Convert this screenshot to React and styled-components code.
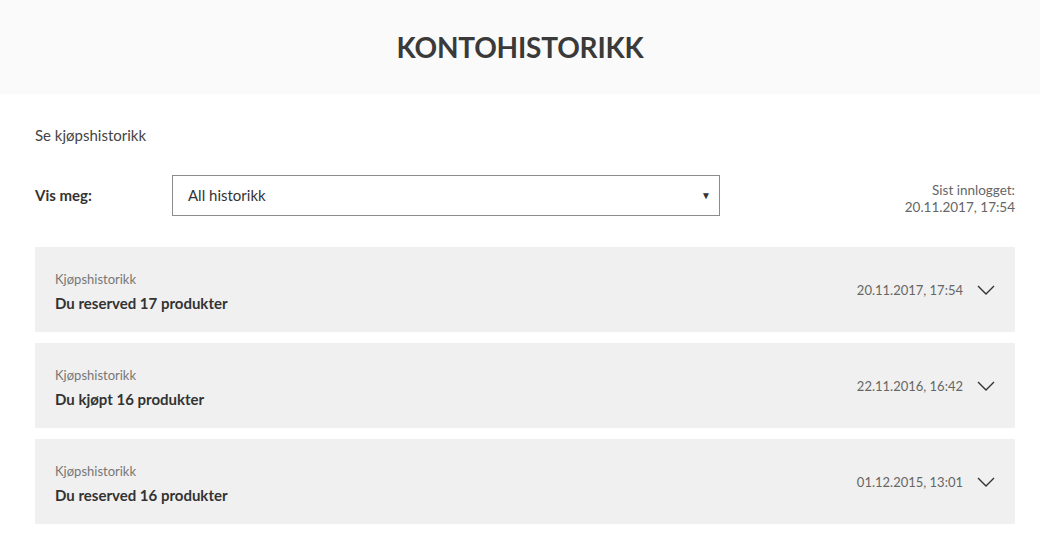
import React from 'react'
import styled, { createGlobalStyle } from 'styled-components'

const Global = createGlobalStyle`
  body {
    margin: 0;
    background: #fff;
    font-family: Lato, "Open Sans", sans-serif;
    color: #333;
  }
`

const Header = styled.header`
  height: 94px;
  background: #fafafa;
  display: flex;
  align-items: center;
  justify-content: center;
`

const Title = styled.h1`
  margin: 0;
  font-size: 28px;
  font-weight: 700;
  color: #3a3a3a;
  letter-spacing: -0.2px;
`

const Main = styled.main`
  padding: 32px 25px 20px 35px;
`

const Intro = styled.p`
  margin: 0 0 30px;
  font-size: 15px;
  color: #444;
`

const FilterRow = styled.div`
  display: flex;
  align-items: center;
  margin-bottom: 31px;
`

const Label = styled.span`
  width: 137px;
  font-size: 15px;
  font-weight: 700;
  color: #333;
`

const Select = styled.div`
  width: 548px;
  height: 41px;
  box-sizing: border-box;
  border: 1px solid #8c8c8c;
  display: flex;
  align-items: center;
  justify-content: space-between;
  padding: 0 8px 0 15px;
  font-size: 15px;
  color: #333;
`

const Arrow = styled.span`
  font-size: 10px;
  color: #333;
`

const LastLogin = styled.div`
  margin-left: auto;
  margin-top: 8px;
  text-align: right;
  font-size: 13.5px;
  line-height: 17px;
  color: #666;
`

const List = styled.div`
  display: flex;
  flex-direction: column;
  gap: 11px;
`

const Card = styled.div`
  height: 85px;
  box-sizing: border-box;
  background: #f0f0f0;
  display: flex;
  align-items: center;
  padding: 0 20px 0 20px;
`

const CardText = styled.div`
  display: flex;
  flex-direction: column;
  gap: 7px;
  padding-top: 3px;
`

const Kind = styled.span`
  font-size: 13px;
  color: #777;
`

const CardTitle = styled.span`
  font-size: 15px;
  font-weight: 700;
  color: #333;
`

const CardDate = styled.span`
  margin-left: auto;
  margin-right: 14px;
  font-size: 13px;
  color: #666;
`

const Chevron = () => (
  <svg width="18" height="10" viewBox="0 0 18 10" fill="none">
    <path d="M1 1l8 8 8-8" stroke="#333" strokeWidth="1.4" />
  </svg>
)

const items = [
  { title: 'Du reserved 17 produkter', date: '20.11.2017, 17:54' },
  { title: 'Du kjøpt 16 produkter', date: '22.11.2016, 16:42' },
  { title: 'Du reserved 16 produkter', date: '01.12.2015, 13:01' },
]

export default function App() {
  return (
    <>
      <Global />
      <Header>
        <Title>KONTOHISTORIKK</Title>
      </Header>
      <Main>
        <Intro>Se kjøpshistorikk</Intro>
        <FilterRow>
          <Label>Vis meg:</Label>
          <Select>
            All historikk
            <Arrow>▼</Arrow>
          </Select>
          <LastLogin>
            Sist innlogget:
            <br />
            20.11.2017, 17:54
          </LastLogin>
        </FilterRow>
        <List>
          {items.map((it) => (
            <Card key={it.date}>
              <CardText>
                <Kind>Kjøpshistorikk</Kind>
                <CardTitle>{it.title}</CardTitle>
              </CardText>
              <CardDate>{it.date}</CardDate>
              <Chevron />
            </Card>
          ))}
        </List>
      </Main>
    </>
  )
}
